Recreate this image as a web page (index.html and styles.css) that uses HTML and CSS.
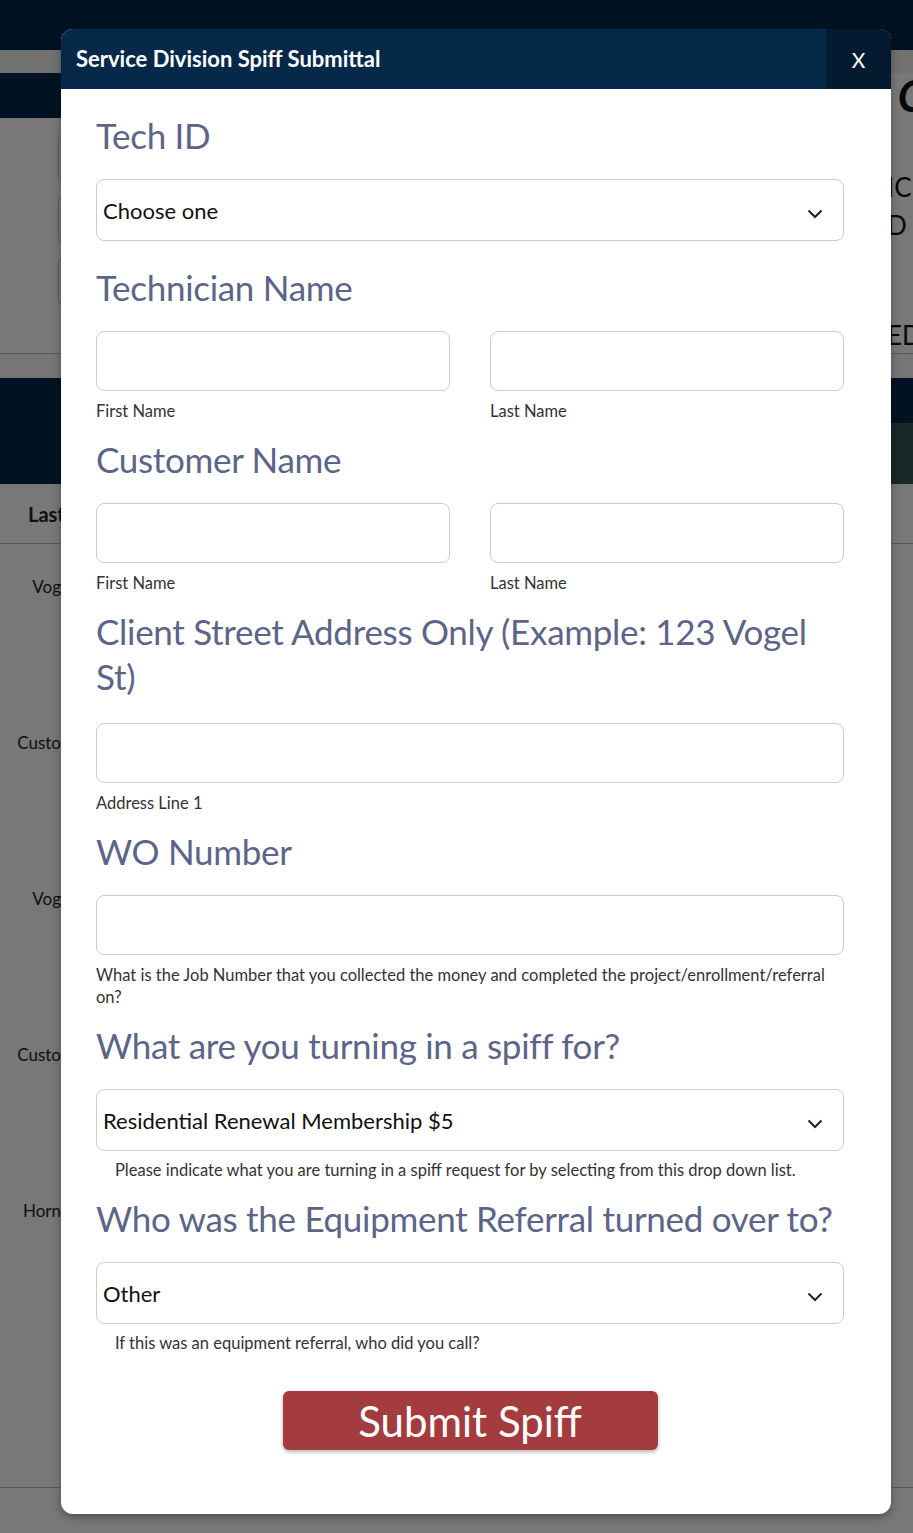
FILE: index.html
```html
<!DOCTYPE html>
<html lang="en">
<head>
    <meta charset="UTF-8">
    <meta name="viewport" content="width=device-width, initial-scale=1.0">
    <title>Service Division Spiff Submittal</title>
    <link rel="stylesheet" href="styles.css">
</head>
<body>
    <!-- page behind the modal -->
    <div class="page">
        <div class="topbar"></div>
        <div class="substrip"></div>
        <div class="titlebar">
            <div class="titlebar-dark"></div>
            <div class="titlebar-text">C</div>
        </div>
        <div class="filters">
            <div class="filter-inputs">
                <div class="ghost-input"></div>
                <div class="ghost-input"></div>
                <div class="ghost-input"></div>
            </div>
            <div class="filter-side">
                <p>IC</p>
                <p>D</p>
                <p class="side-gap">ED</p>
            </div>
        </div>
        <div class="filter-foot"></div>
        <div class="band">
            <div class="band-top"></div>
            <div class="band-bottom"></div>
        </div>
        <div class="table-head"><span>Last</span></div>
        <div class="table-row">Vog</div>
        <div class="table-row">Custo</div>
        <div class="table-row">Vog</div>
        <div class="table-row">Custo</div>
        <div class="table-row">Horn</div>
        <div class="table-end"></div>
    </div>
    <div class="overlay"></div>

    <div class="modal">
        <div class="modal-header">
            <h3>Service Division Spiff Submittal</h3>
            <button class="close">X</button>
        </div>
        <form class="modal-body">
            <h2>Tech ID</h2>
            <div class="select-wrap">
                <select>
                    <option>Choose one</option>
                </select>
                <svg class="chevron" width="16" height="10" viewBox="0 0 16 10"><path d="M1.5 1.5 L8 8 L14.5 1.5" fill="none" stroke="#222" stroke-width="2"/></svg>
            </div>

            <h2 class="gap-lg">Technician Name</h2>
            <div class="name-row">
                <div class="field">
                    <input type="text">
                    <span class="sub">First Name</span>
                </div>
                <div class="field">
                    <input type="text">
                    <span class="sub">Last Name</span>
                </div>
            </div>

            <h2>Customer Name</h2>
            <div class="name-row">
                <div class="field">
                    <input type="text">
                    <span class="sub">First Name</span>
                </div>
                <div class="field">
                    <input type="text">
                    <span class="sub">Last Name</span>
                </div>
            </div>

            <h2 class="two-line">Client Street Address Only (Example: 123 Vogel St)</h2>
            <div class="field">
                <input type="text">
                <span class="sub">Address Line 1</span>
            </div>

            <h2>WO Number</h2>
            <div class="field">
                <input type="text">
                <span class="sub">What is the Job Number that you collected the money and completed the project/enrollment/referral on?</span>
            </div>

            <h2>What are you turning in a spiff for?</h2>
            <div class="select-wrap">
                <select>
                    <option>Residential Renewal Membership $5</option>
                </select>
                <svg class="chevron" width="16" height="10" viewBox="0 0 16 10"><path d="M1.5 1.5 L8 8 L14.5 1.5" fill="none" stroke="#222" stroke-width="2"/></svg>
            </div>
            <span class="sub indent">Please indicate what you are turning in a spiff request for by selecting from this drop down list.</span>

            <h2>Who was the Equipment Referral turned over to?</h2>
            <div class="select-wrap">
                <select>
                    <option>Other</option>
                </select>
                <svg class="chevron" width="16" height="10" viewBox="0 0 16 10"><path d="M1.5 1.5 L8 8 L14.5 1.5" fill="none" stroke="#222" stroke-width="2"/></svg>
            </div>
            <span class="sub indent">If this was an equipment referral, who did you call?</span>

            <div class="actions">
                <button type="button" class="submit">Submit Spiff</button>
            </div>
        </form>
    </div>
</body>
</html>
```

FILE: styles.css
```css
html, body {
    margin: 0;
    padding: 0;
}
body {
    font-family: Lato, "Open Sans", Arial, sans-serif;
    color: #222;
    background-color: #fff;
    width: 913px;
    height: 1533px;
    overflow: hidden;
    position: relative;
}

/* background page */
.page {
    height: 1533px;
}
.topbar {
    height: 50px;
    background-color: #04294c;
}
.substrip {
    height: 23px;
    background-color: #f0f0f0;
}
.titlebar {
    height: 45px;
    display: flex;
}
.titlebar-dark {
    width: 200px;
    background-color: #04294c;
}
.titlebar-text {
    flex: 1;
    text-align: right;
    font-size: 44px;
    font-style: italic;
    font-weight: 700;
    color: #111;
    margin-right: -12px;
    line-height: 45px;
}
.filters {
    height: 235px;
    display: flex;
    justify-content: space-between;
}
.filter-inputs {
    padding: 16px 0 0 58px;
    display: flex;
    flex-direction: column;
    gap: 15px;
}
.ghost-input {
    width: 200px;
    height: 45px;
    border: 1px solid #ccc;
    border-radius: 5px;
}
.filter-side {
    width: 26px;
    overflow: hidden;
    white-space: nowrap;
    font-size: 26px;
    color: #111;
    padding-top: 50px;
}
.filter-side p {
    margin: 0;
    line-height: 38px;
}
.filter-side .side-gap {
    margin-top: 72px;
}
.filter-foot {
    height: 24px;
    border-top: 1px solid #bbb;
    background-color: #fafafa;
}
.band-top {
    height: 45px;
    background-color: #04294c;
}
.band-bottom {
    height: 61px;
    background: linear-gradient(to right, #04294c 0, #04294c 60%, #3a5656 60%);
}
.table-head {
    height: 59px;
    border-bottom: 1px solid #bbb;
    display: flex;
    align-items: center;
    padding-left: 28px;
    font-size: 20px;
    font-weight: 700;
}
.table-row {
    height: 156px;
    width: 61px;
    text-align: right;
    font-size: 17px;
    line-height: 20px;
    padding-top: 33px;
    box-sizing: border-box;
    white-space: nowrap;
    direction: rtl;
}
.table-end {
    border-top: 1px solid #bbb;
    margin-top: 163px;
}
.overlay {
    position: absolute;
    inset: 0;
    background-color: rgba(0, 0, 0, 0.53);
}

/* modal */
.modal {
    position: absolute;
    top: 29px;
    left: 61px;
    width: 830px;
    height: 1485px;
    background-color: #fff;
    border-radius: 12px;
    overflow: hidden;
    box-shadow: 0 3px 8px rgba(0, 0, 0, 0.35);
}
.modal-header {
    height: 60px;
    background-color: #062849;
    display: flex;
    align-items: stretch;
    justify-content: space-between;
}
.modal-header h3 {
    margin: 0;
    padding-left: 15px;
    color: #fff;
    font-size: 22px;
    font-weight: 700;
    line-height: 60px;
}
.close {
    width: 65px;
    border: none;
    background-color: #041a30;
    color: #fff;
    font-family: Lato, Arial, sans-serif;
    font-size: 21px;
    padding: 0;
    cursor: pointer;
}
.modal-body {
    padding: 24px 47px 0 35px;
    display: flex;
    flex-direction: column;
}
.modal-body h2 {
    margin: 15px 0 21px;
    font-size: 35px;
    font-weight: 400;
    line-height: 45px;
    color: #5d6488;
    letter-spacing: -0.3px;
}
.modal-body h2:first-child {
    margin-top: 0;
}
.modal-body h2.gap-lg {
    margin-top: 24px;
}
.modal-body h2.two-line {
    margin-bottom: 24px;
}
.select-wrap {
    position: relative;
}
select {
    appearance: none;
    -webkit-appearance: none;
    width: 100%;
    height: 62px;
    border: 1px solid #ccc;
    border-radius: 8px;
    background-color: #fff;
    font-family: Lato, Arial, sans-serif;
    font-size: 22px;
    color: #111;
    padding: 0 6px;
}
.chevron {
    position: absolute;
    right: 21px;
    top: 30px;
}
input {
    display: block;
    width: 100%;
    height: 60px;
    box-sizing: border-box;
    border: 1px solid #ccc;
    border-radius: 8px;
    font-size: 20px;
}
.name-row {
    display: grid;
    grid-template-columns: 1fr 1fr;
    gap: 40px;
}
.sub {
    display: block;
    font-size: 16.5px;
    line-height: 22px;
    color: #333;
    margin-top: 9px;
}
.sub.indent {
    padding-left: 19px;
    margin-top: 8px;
}
.actions {
    display: flex;
    justify-content: center;
    margin-top: 37px;
}
.submit {
    width: 375px;
    height: 59px;
    background-color: #a33b3f;
    color: #fff;
    border: none;
    border-radius: 6px;
    font-family: Lato, Arial, sans-serif;
    font-size: 42px;
    box-shadow: 0 2px 4px rgba(0, 0, 0, 0.3);
    cursor: pointer;
}
```
